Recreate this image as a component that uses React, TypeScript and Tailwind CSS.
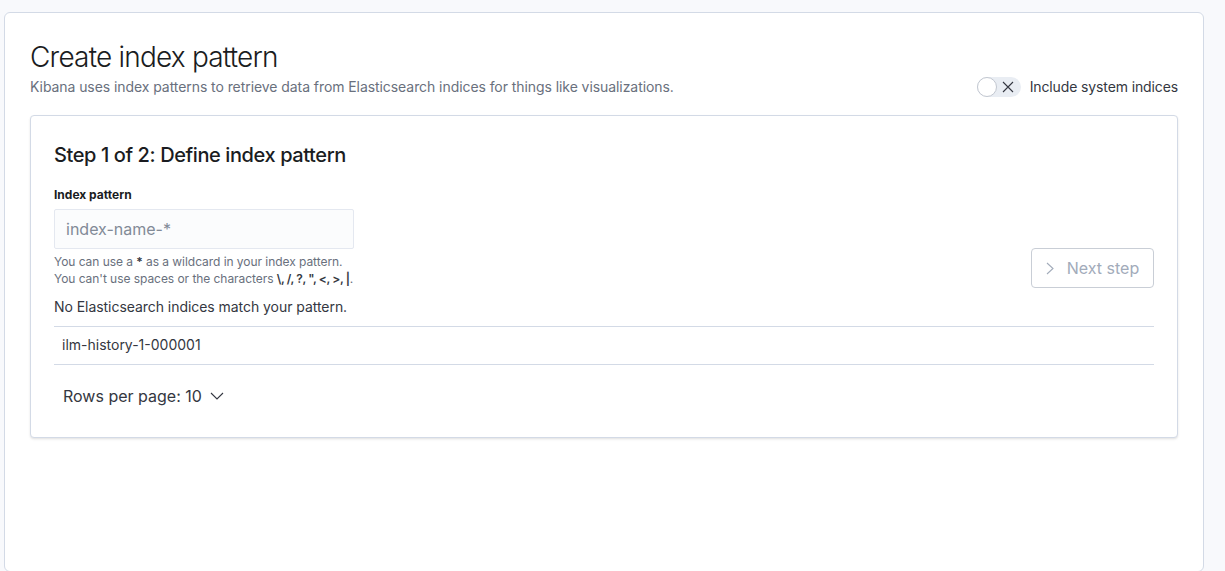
export default function App() {
    return (
        <div className="min-h-[571px] bg-[#f8f9fc] pt-[12px] pl-[4px] pr-[21px] font-['Inter',sans-serif] text-[#343741] overflow-hidden h-[571px]">
            <div className="h-[560px] rounded-[6px] border border-[#d3dae6] bg-white px-[25px] pt-[24px]">
                {/* Header */}
                <div className="flex items-end justify-between">
                    <div>
                        <h1 className="text-[28px] leading-[40px] font-light text-[#1a1c21] tracking-[-0.8px]">Create index pattern</h1>
                        <p className="text-[14px] leading-[20px] text-[#69707d] tracking-[-0.07px]">
                            Kibana uses index patterns to retrieve data from Elasticsearch indices for things like visualizations.
                        </p>
                    </div>
                    <div className="flex items-center gap-[9px]">
                        <div className="relative flex h-[20px] w-[44px] items-center rounded-full bg-[#e9edf3]">
                            <div className="absolute left-0 top-0 h-[20px] w-[20px] rounded-full border border-[#c2c7d0] bg-white" />
                            <svg className="absolute right-[7px] top-[4px]" width="12" height="12" viewBox="0 0 12 12" fill="none" stroke="#343741" strokeWidth="1.1">
                                <path d="M1 1L11 11M11 1L1 11" />
                            </svg>
                        </div>
                        <span className="text-[14px] leading-[20px] text-[#343741] tracking-[-0.12px]">Include system indices</span>
                    </div>
                </div>

                {/* Step panel */}
                <div className="mt-[18px] rounded-[4px] border border-[#d3dae6] bg-white px-[23px] pt-[23px] pb-[25px] shadow-[0_1px_2px_rgba(0,0,0,0.08),0_2px_3px_rgba(0,0,0,0.04)]">
                    <h2 className="text-[20px] leading-[32px] font-medium text-[#1a1c21] tracking-[-0.4px]">Step 1 of 2: Define index pattern</h2>

                    <div className="flex items-end justify-between">
                        <div className="mt-[16px]">
                            <label className="block text-[12px] leading-[16px] font-bold text-[#1a1c21]">Index pattern</label>
                            <input
                                placeholder="index-name-*"
                                className="mt-[6px] block h-[40px] w-[300px] rounded-[2px] border border-[#e4e8f0] bg-[#fbfcfd] px-[11px] text-[16px] text-[#343741] outline-none placeholder:text-[#828a97]"
                            />
                            <div className="mt-[4px] text-[12px] leading-[17px] text-[#69707d] tracking-[-0.05px]">
                                <div>You can use a <b className="font-semibold text-[#343741]">*</b> as a wildcard in your index pattern.</div>
                                <div>
                                    You can't use spaces or the characters <b className="font-semibold text-[#343741] tracking-[-0.4px]">\, /, ?, ", &lt;, &gt;, |</b>.
                                </div>
                            </div>
                        </div>
                        <button className="mb-[-1px] flex h-[40px] w-[123px] items-center justify-center gap-[13px] rounded-[4px] border border-[#c9ced6] bg-white text-[16px] text-[#a2abba]">
                            <svg width="8" height="13" viewBox="0 0 8 13" fill="none" stroke="#a2abba" strokeWidth="1.1">
                                <path d="M1 1L7 6.5L1 12" />
                            </svg>
                            <span>Next step</span>
                        </button>
                    </div>

                    <p className="mt-[10px] text-[14px] leading-[20px] text-[#343741] tracking-[-0.05px]">No Elasticsearch indices match your pattern.</p>

                    <div className="mt-[9px] border-t border-b border-[#d3dae6] px-[8px] pt-[8px] pb-[9px] text-[14px] leading-[20px] text-[#343741]">
                        ilm-history-1-000001
                    </div>

                    <button className="mt-[15px] ml-[9px] flex h-[32px] items-center gap-[8px] text-[16px] text-[#343741]">
                        <span>Rows per page: 10</span>
                        <svg width="14" height="8" viewBox="0 0 14 8" fill="none" stroke="#343741" strokeWidth="1.1">
                            <path d="M1 1L7 7L13 1" />
                        </svg>
                    </button>
                </div>
            </div>
        </div>
    )
}
